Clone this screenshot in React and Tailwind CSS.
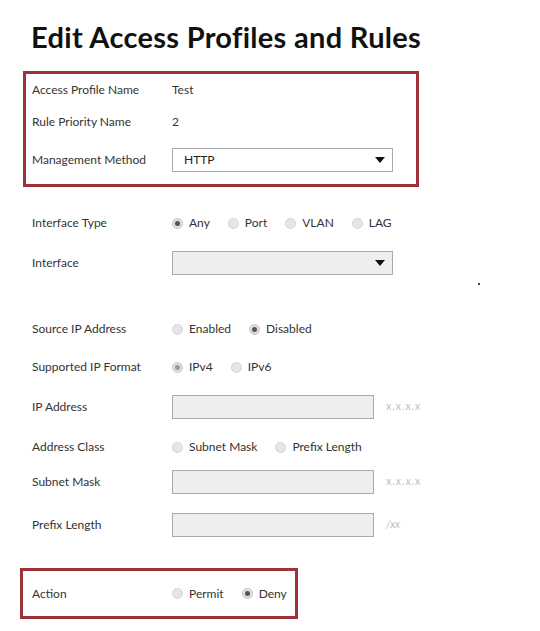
const FONT = { fontFamily: "Lato, 'Liberation Sans', sans-serif" };

function Radio({ label, checked, faded }) {
  return (
    <div className="flex items-center">
      <span
        className={
          checked
            ? "flex h-[11px] w-[11px] items-center justify-center rounded-full border border-[#c8c8c8] bg-[#dedede]"
            : "h-[11px] w-[11px] rounded-full border border-[#d4d4d4] bg-[#e6e6e6]"
        }
      >
        {checked && (
          <span className={"h-[5px] w-[5px] rounded-full " + (faded ? "bg-[#9a9a9a]" : "bg-[#555]")} />
        )}
      </span>
      <span className="ml-[6px]">{label}</span>
    </div>
  );
}

function RadioGroup({ options, value, faded }) {
  return (
    <div className="flex items-center gap-[18px]">
      {options.map((o) => (
        <Radio key={o} label={o} checked={o === value} faded={faded} />
      ))}
    </div>
  );
}

function Select({ value, disabled }) {
  return (
    <div
      className={
        "flex h-[24px] w-[221px] items-center justify-between border border-[#aaa] pl-[11px] pr-[7px] " +
        (disabled ? "bg-[#eeeeee]" : "bg-white")
      }
    >
      <span className="text-[#222]">{value}</span>
      <svg width="10" height="6" viewBox="0 0 10 6">
        <path d="M0 0 L10 0 L5 6 Z" fill="#111" />
      </svg>
    </div>
  );
}

function TextBox({ hint, italic }) {
  return (
    <div className="flex items-center">
      <div className="h-[24px] w-[202px] border border-[#aaa] bg-[#eeeeee]" />
      <span
        className={
          "ml-[12px] text-[10.5px] text-[#bdbdbd] " + (italic ? "italic" : "tracking-[1px]")
        }
      >
        {hint}
      </span>
    </div>
  );
}

function Row({ label, children, className = "" }) {
  return (
    <div className={"flex h-[24px] items-center " + className}>
      <div className="w-[140px] shrink-0">{label}</div>
      {children}
    </div>
  );
}

export default function App() {
  return (
    <div className="min-h-[631px] w-[540px] bg-white text-[12px] text-[#333]" style={FONT}>
      <h1 className="ml-[31px] pt-[20px] text-[29px] font-bold leading-[34px] tracking-[0.3px] text-[#111]">
        Edit Access Profiles and Rules
      </h1>

      <div className="ml-[23px] mt-[17px] w-[396px] border-[3px] border-[#a1303d] pb-[12px] pl-[6px]">
        <Row label="Access Profile Name" className="!h-[32px]">
          <span>Test</span>
        </Row>
        <Row label="Rule Priority Name" className="!h-[32px]">
          <span>2</span>
        </Row>
        <Row label="Management Method" className="mt-[10px]">
          <Select value="HTTP" />
        </Row>
      </div>

      <div className="pl-[32px]">
        <Row label="Interface Type" className="mt-[24px]">
          <RadioGroup options={["Any", "Port", "VLAN", "LAG"]} value="Any" />
        </Row>
        <Row label="Interface" className="mt-[16px]">
          <Select value="" disabled />
          <span className="-mb-[10px] ml-[85px] h-[2px] w-[2px] self-end bg-[#444]" />
        </Row>

        <Row label="Source IP Address" className="mt-[42px]">
          <RadioGroup options={["Enabled", "Disabled"]} value="Disabled" />
        </Row>
        <Row label="Supported IP Format" className="mt-[14px]">
          <RadioGroup options={["IPv4", "IPv6"]} value="IPv4" faded />
        </Row>
        <Row label="IP Address" className="mt-[16px]">
          <TextBox hint="x.x.x.x" />
        </Row>
        <Row label="Address Class" className="mt-[16px]">
          <RadioGroup options={["Subnet Mask", "Prefix Length"]} value="" />
        </Row>
        <Row label="Subnet Mask" className="mt-[11px]">
          <TextBox hint="x.x.x.x" />
        </Row>
        <Row label="Prefix Length" className="mt-[19px]">
          <TextBox hint="/xx" italic />
        </Row>
      </div>

      <div className="ml-[20px] mt-[31px] flex h-[51px] w-[278px] items-center border-[3px] border-[#a1303d] pl-[9px]">
        <div className="w-[140px] shrink-0">Action</div>
        <RadioGroup options={["Permit", "Deny"]} value="Deny" />
      </div>
    </div>
  );
}
